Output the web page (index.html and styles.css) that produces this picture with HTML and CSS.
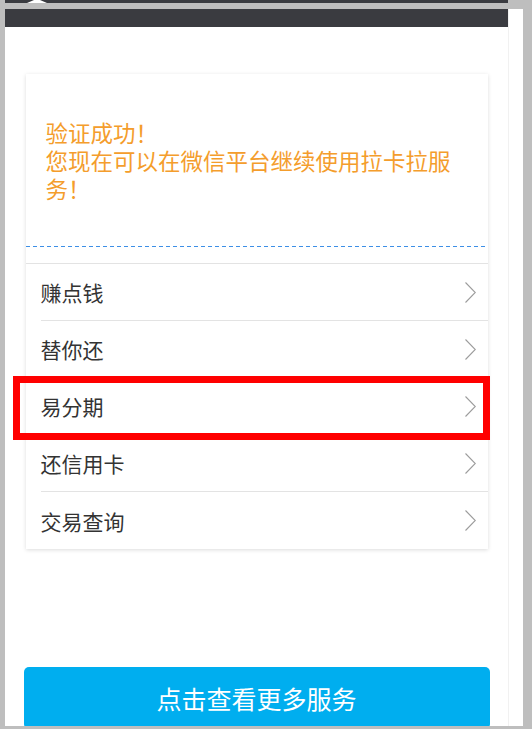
FILE: index.html
```html
<!DOCTYPE html>
<html lang="zh-CN">
<head>
<meta charset="utf-8">
<title>验证成功</title>
<link rel="stylesheet" href="styles.css">
</head>
<body>
  <div class="top-strip">
    <svg class="strip-icon" width="20" height="3" viewBox="0 0 20 3"><polygon points="0,3 7,0 13,0 20,3" fill="#ffffff"/></svg>
  </div>
  <div class="frame">
    <div class="screen">
      <div class="titlebar"></div>
      <div class="content">
        <section class="card">
          <div class="message">
            <p>验证成功！<br>您现在可以在微信平台继续使用拉卡拉服务！</p>
          </div>
          <div class="dashed"></div>
          <ul class="menu">
            <li class="item"><span>赚点钱</span><svg class="chev" width="11" height="21" viewBox="0 0 11 21"><polyline points="0.5,0.5 10.3,10.5 0.5,20.5" fill="none" stroke="#9c9c9c" stroke-width="1.1"/></svg></li>
            <li class="item"><span>替你还</span><svg class="chev" width="11" height="21" viewBox="0 0 11 21"><polyline points="0.5,0.5 10.3,10.5 0.5,20.5" fill="none" stroke="#9c9c9c" stroke-width="1.1"/></svg></li>
            <li class="item"><span>易分期</span><svg class="chev" width="11" height="21" viewBox="0 0 11 21"><polyline points="0.5,0.5 10.3,10.5 0.5,20.5" fill="none" stroke="#9c9c9c" stroke-width="1.1"/></svg><div class="highlight"></div></li>
            <li class="item"><span>还信用卡</span><svg class="chev" width="11" height="21" viewBox="0 0 11 21"><polyline points="0.5,0.5 10.3,10.5 0.5,20.5" fill="none" stroke="#9c9c9c" stroke-width="1.1"/></svg></li>
            <li class="item"><span>交易查询</span><svg class="chev" width="11" height="21" viewBox="0 0 11 21"><polyline points="0.5,0.5 10.3,10.5 0.5,20.5" fill="none" stroke="#9c9c9c" stroke-width="1.1"/></svg></li>
          </ul>
        </section>
        <button class="more">点击查看更多服务</button>
      </div>
    </div>
  </div>
</body>
</html>
```

FILE: styles.css
```css
* { box-sizing: border-box; }

html, body {
  margin: 0;
  padding: 0;
  height: 729px;
  overflow: hidden;
}

body {
  background: #bebebe;
  font-family: "Noto Sans CJK SC", "Noto Sans", sans-serif;
}

.top-strip {
  margin-left: 5px;
  width: 503px;
  height: 3px;
  background: #3a3b40;
  display: flex;
}

.strip-icon {
  display: block;
  margin-left: 22px;
}

.frame {
  margin-top: 6px;
  margin-left: 5px;
  width: 518px;
  height: 717px;
  background: #ffffff;
  overflow: hidden;
}

.screen {
  width: 504px;
  height: 100%;
  border-right: 1px solid #f1f1f1;
}

.titlebar {
  height: 18px;
  background: #3a3b40;
}

.content {
  display: flex;
  flex-direction: column;
  align-items: center;
  padding-top: 47px;
}

.card {
  width: 462px;
  background: #ffffff;
  box-shadow: 0 1px 4px rgba(0, 0, 0, 0.14);
}

.message {
  padding: 44px 30px 44px 20px;
  color: #f49d2c;
  font-size: 22.5px;
  line-height: 28px;
}

.message p {
  margin: 0;
}

.dashed {
  height: 1px;
  background: repeating-linear-gradient(to right, #3d8fe6 0 4px, transparent 4px 7px);
}

.menu {
  list-style: none;
  margin: 16px 0 0 0;
  padding: 0;
  border-top: 1px solid #e3e3e3;
}

.item {
  position: relative;
  height: 57px;
  margin-left: 15px;
  padding-right: 12px;
  display: flex;
  align-items: center;
  justify-content: space-between;
  border-bottom: 1px solid #e3e3e3;
  color: #333333;
  font-size: 21px;
}

.item:last-child {
  border-bottom: none;
}

.chev {
  display: block;
}

.highlight {
  position: absolute;
  left: -28px;
  right: -2px;
  top: -2px;
  height: 64px;
  border: 7px solid #ff0000;
  pointer-events: none;
}

.more {
  margin-top: 118px;
  width: 466px;
  height: 62px;
  border: none;
  border-radius: 5px;
  background: #00aeef;
  color: #ffffff;
  font-family: "Noto Sans CJK SC", "Noto Sans", sans-serif;
  font-size: 25px;
  padding: 0;
}
```
